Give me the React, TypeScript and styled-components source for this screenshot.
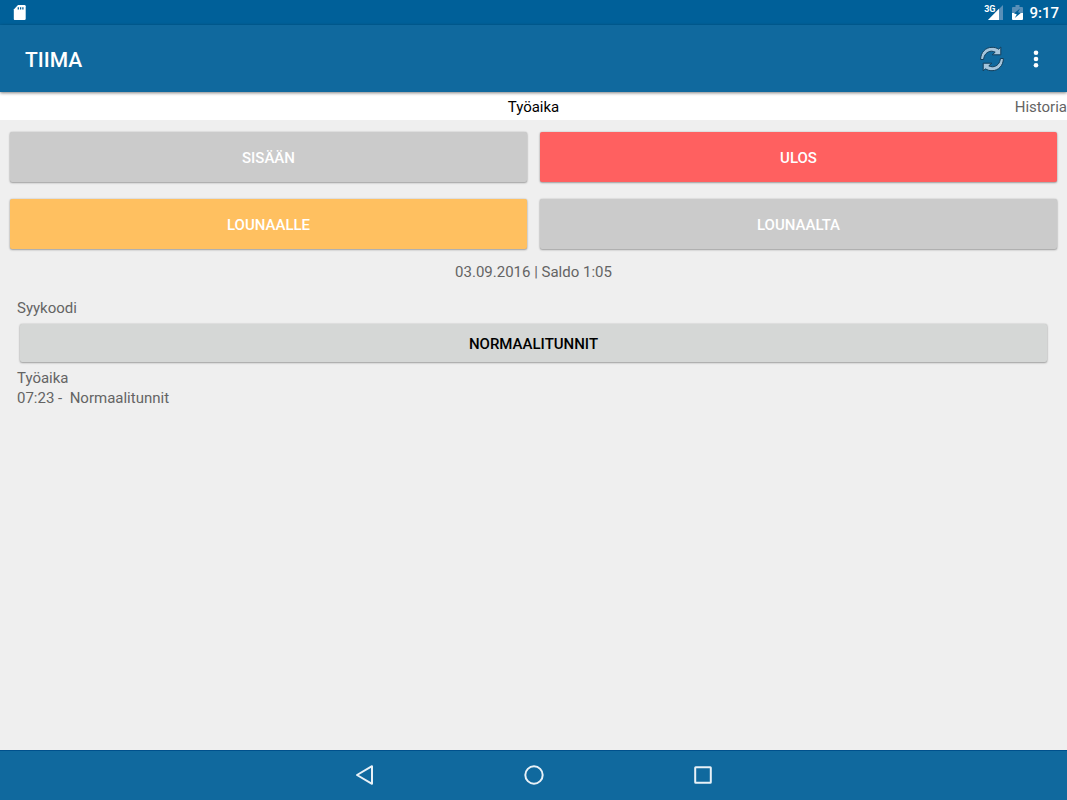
import React from "react";
import styled, { createGlobalStyle } from "styled-components";

const GlobalStyle = createGlobalStyle`
  *, *::before, *::after { box-sizing: border-box; }
  body {
    margin: 0;
    background: #efefef;
    color: #646464;
    font-family: Roboto, "Liberation Sans", sans-serif;
    font-size: 15px;
    line-height: 20px;
  }
  button {
    margin: 0;
    padding: 0;
    border: 0;
    font: inherit;
    cursor: pointer;
  }
  svg { display: block; }
`;

const Screen = styled.div`
  display: flex;
  flex-direction: column;
  min-height: 100vh;
`;

const StatusBar = styled.div`
  display: flex;
  align-items: center;
  justify-content: space-between;
  height: 25px;
  padding: 0 8px 0 13px;
  background: #006099;
  color: #fff;
`;

const StatusIcons = styled.div`
  display: flex;
  align-items: center;
  gap: 6px;
`;

const Clock = styled.time`
  padding-top: 2px;
  font-weight: 500;
  line-height: 23px;
`;

const AppBar = styled.header`
  position: relative;
  display: flex;
  align-items: center;
  justify-content: space-between;
  height: 67px;
  padding: 0 15px 0 25px;
  background: #10699e;
  box-shadow: 0 1px 3px rgba(0, 0, 0, 0.5);
`;

const Title = styled.h1`
  margin: 0;
  padding-top: 3px;
  color: #fff;
  font-size: 21px;
  font-weight: 500;
  line-height: 28px;
`;

const Actions = styled.div`
  display: flex;
  align-items: center;
  gap: 12px;
`;

const IconButton = styled.button`
  display: grid;
  place-items: center;
  width: 32px;
  height: 32px;
  background: none;
  color: #fff;
`;

const Tabs = styled.nav`
  display: grid;
  grid-template-columns: 1fr auto 1fr;
  height: 28px;
  background: #fff;
`;

const Tab = styled.a<{ $active?: boolean }>`
  grid-column: ${({ $active }) => ($active ? 2 : 3)};
  justify-self: end;
  padding-top: 1px;
  color: ${({ $active }) => ($active ? "#000" : "#646464")};
  line-height: 28px;
  text-decoration: none;
`;

const Content = styled.main`
  flex: 1;
  padding: 12px 10px;
`;

const PunchGrid = styled.div`
  display: grid;
  grid-template-columns: 1fr 1fr;
  gap: 17px 13px;
`;

const RaisedButton = styled.button`
  padding-top: 2px;
  border-radius: 2px;
  box-shadow: 0 1px 2px rgba(0, 0, 0, 0.3), 0 0 2px rgba(0, 0, 0, 0.2);
  font-weight: 500;
`;

const tones = { idle: "#cbcbcb", out: "#ff6060", lunch: "#ffc060" };

const PunchButton = styled(RaisedButton)<{ $tone: keyof typeof tones }>`
  height: 50px;
  background: ${({ $tone }) => tones[$tone]};
  color: #fff;
`;

const Balance = styled.p`
  margin: 13px 0 0;
  text-align: center;
`;

const Details = styled.section`
  margin-top: 16px;
  padding: 0 7px;
`;

const Label = styled.label`
  display: block;
`;

const ReasonRow = styled.div`
  display: flex;
  padding: 6px 3px;
`;

const ReasonButton = styled(RaisedButton)`
  flex: 1;
  height: 38px;
  background: #d5d7d6;
  color: #000;
`;

const Entry = styled.p`
  margin: 0;
  white-space: pre-wrap;
`;

const NavBar = styled.nav`
  display: flex;
  align-items: center;
  justify-content: center;
  gap: 121px;
  height: 50px;
  padding-bottom: 1px;
  border-top: 1px solid #00508c;
  background: #10699e;
`;

const NavButton = styled(IconButton)`
  width: 48px;
  height: 48px;
`;

const Signal = styled.div`
  display: flex;
  align-items: flex-start;
  height: 15px;
  margin-right: 3px;
`;

const NetworkType = styled.span`
  font-size: 9px;
  font-weight: 700;
  line-height: 9px;
`;

const SignalIcon = styled.svg`
  margin-left: -8px;
`;

const SdCardIcon = () => (
  <svg width="13" height="16" viewBox="0 0 13 16" aria-hidden="true">
    <path d="M5 0h6.5q1.2 0 1.2 1.2v12.6q0 1.2-1.2 1.2h-10Q.8 15 .8 13.8V4.5z" fill="#fff" />
    <path d="M5.3 2.2v2.4M7.6 2.2v2.4M9.9 2.2v2.4" stroke="#006099" strokeWidth="1.3" />
  </svg>
);

const BatteryIcon = () => (
  <svg width="11" height="16" viewBox="0 0 11 16" aria-hidden="true">
    <path d="M3.5 0h4v2H10q1 0 1 1v5H0V3q0-1 1-1h2.5z" fill="#598fb8" />
    <path d="M0 8h11v6q0 1-1 1H1q-1 0-1-1z" fill="#fff" />
    <path d="M8 3.4 2 8.4l2.8.8-2 3.8 6-5-2.8-.8z" fill="#006099" />
  </svg>
);

const SyncIcon = () => (
  <svg width="26" height="28" viewBox="0 0 26 28" aria-hidden="true">
    <g fill="#a5c5dc" stroke="#123e5b" strokeWidth="1" strokeLinejoin="round">
      <path d="M1.6 14.5C1.6 7.6 6.4 2.3 13 2.3c2.6 0 4.7.6 6.6 1.9L21.8 2v7.8h-8.6l3-2.6c-1-.6-2.4-1-3.8-1-4.4.2-7.4 3.7-7.8 8.3z" />
      <path d="M24.4 13.5c0 6.9-4.8 12.2-11.4 12.2-2.6 0-4.7-.6-6.6-1.9L4.2 26v-7.8h8.6l-3 2.6c1 .6 2.4 1 3.8 1 4.4-.2 7.4-3.7 7.8-8.3z" />
    </g>
  </svg>
);

export default function App() {
  return (
    <Screen>
      <GlobalStyle />
      <StatusBar>
        <SdCardIcon />
        <StatusIcons>
          <Signal>
            <NetworkType>3G</NetworkType>
            <SignalIcon width="16" height="15" viewBox="0 0 16 15" aria-hidden="true">
              <path d="M16 0v15H1z" fill="#598fb8" />
              <path d="M12 3.8V15H1z" fill="#fff" />
            </SignalIcon>
          </Signal>
          <BatteryIcon />
          <Clock>9:17</Clock>
        </StatusIcons>
      </StatusBar>
      <AppBar>
        <Title>TIIMA</Title>
        <Actions>
          <IconButton type="button" aria-label="Päivitä">
            <SyncIcon />
          </IconButton>
          <IconButton type="button" aria-label="Valikko">
            <svg width="6" height="18" viewBox="0 0 6 18" fill="#fff" aria-hidden="true">
              <circle cx="3" cy="2.8" r="2.3" />
              <circle cx="3" cy="9" r="2.3" />
              <circle cx="3" cy="15.2" r="2.3" />
            </svg>
          </IconButton>
        </Actions>
      </AppBar>
      <Tabs>
        <Tab href="#tyoaika" $active aria-current="page">Työaika</Tab>
        <Tab href="#historia">Historia</Tab>
      </Tabs>
      <Content>
        <PunchGrid>
          <PunchButton type="button" $tone="idle">SISÄÄN</PunchButton>
          <PunchButton type="button" $tone="out">ULOS</PunchButton>
          <PunchButton type="button" $tone="lunch">LOUNAALLE</PunchButton>
          <PunchButton type="button" $tone="idle">LOUNAALTA</PunchButton>
        </PunchGrid>
        <Balance>03.09.2016 | Saldo 1:05</Balance>
        <Details>
          <Label htmlFor="reason">Syykoodi</Label>
          <ReasonRow>
            <ReasonButton type="button" id="reason">NORMAALITUNNIT</ReasonButton>
          </ReasonRow>
          <Entry>Työaika</Entry>
          <Entry>{"07:23 -  Normaalitunnit"}</Entry>
        </Details>
      </Content>
      <NavBar>
        <NavButton type="button" aria-label="Takaisin">
          <svg width="20" height="22" viewBox="0 0 20 22" aria-hidden="true">
            <path d="M17 2.2v17.6L2 11z" fill="none" stroke="#e8f1f7" strokeWidth="2" strokeLinejoin="round" />
          </svg>
        </NavButton>
        <NavButton type="button" aria-label="Koti">
          <svg width="20" height="20" viewBox="0 0 20 20" aria-hidden="true">
            <circle cx="10" cy="10" r="8.7" fill="none" stroke="#e8f1f7" strokeWidth="2" />
          </svg>
        </NavButton>
        <NavButton type="button" aria-label="Viimeisimmät">
          <svg width="18" height="18" viewBox="0 0 18 18" aria-hidden="true">
            <rect x="1.2" y="1.2" width="15.6" height="15.6" rx=".5" fill="none" stroke="#e8f1f7" strokeWidth="2" />
          </svg>
        </NavButton>
      </NavBar>
    </Screen>
  );
}
